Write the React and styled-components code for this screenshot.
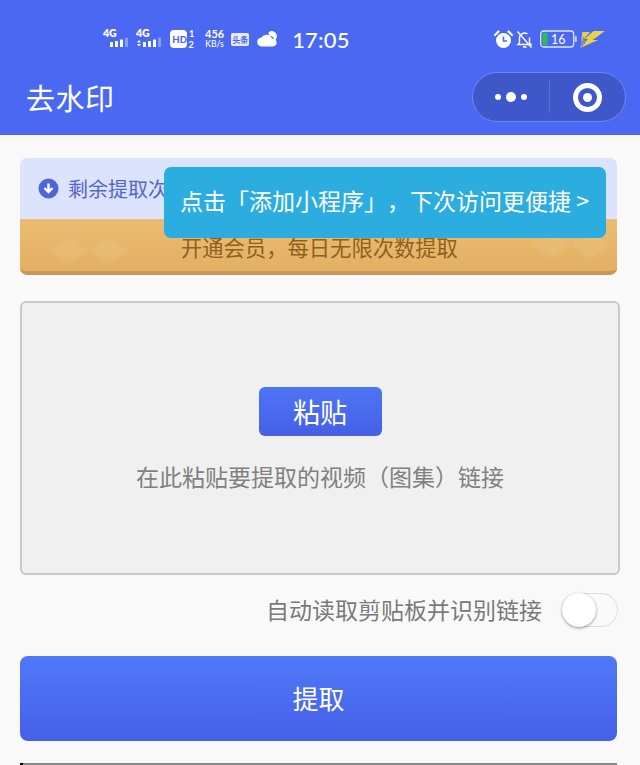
import React from 'react'
import styled, { createGlobalStyle } from 'styled-components'

const GlobalStyle = createGlobalStyle`
  html, body { margin:0; padding:0; background:#f9f9f9; }
  body { font-family:"Noto Sans CJK SC","Noto Sans",Roboto,sans-serif; text-spacing-trim:space-all; }
  * { box-sizing:border-box; }
`

const Page = styled.div`
  width:640px;
  height:765px;
  overflow:hidden;
  display:flex;
  flex-direction:column;
`
const Header = styled.header`
  height:135px;
  flex:none;
  background:#4a68f1;
  display:flex;
  flex-direction:column;
  color:#fff;
`
const StatusBar = styled.div`
  height:62px;
  flex:none;
  padding:16px 0 0 103px;
  display:flex;
  align-items:center;
  font-family:Lato,"Noto Sans",sans-serif;
`
const StatusLeft = styled.div`
  display:flex;
  align-items:center;
  height:34px;
`
const StatusRight = styled.div`
  margin-left:auto;
  padding-right:35px;
  display:flex;
  align-items:center;
  gap:3px;
  height:34px;
`
const Clock = styled.span`
  font-size:22px;
  font-weight:500;
  letter-spacing:.2px;
  margin-left:14px;
`
const Speed = styled.span`
  display:flex;
  flex-direction:column;
  align-items:center;
  font-size:11px;
  line-height:10px;
  font-weight:700;
  margin:0 7px 0 9px;
  small { font-size:8.5px; font-weight:500; }
`
const TinyBadge = styled.span`
  font-size:8px;
  line-height:13px;
  width:18px;
  height:13px;
  background:#e8ecfd;
  color:#4a68f1;
  font-weight:700;
  text-align:center;
  font-family:"Noto Sans CJK SC",sans-serif;
  border-radius:2px;
  overflow:hidden;
  white-space:nowrap;
  margin-right:8px;
`
const Spacer = styled.span`
  width:${p => p.$width}px;
`
const TitleBar = styled.div`
  flex:1;
  display:flex;
  align-items:center;
  justify-content:space-between;
  padding:0 14px 3px 26px;
`
const Title = styled.h1`
  margin:0;
  font-size:29px;
  line-height:40px;
  font-weight:400;
  letter-spacing:.5px;
`
const Capsule = styled.div`
  width:154px;
  height:50px;
  border-radius:25px;
  background:#3f58c9;
  border:1px solid #7088ee;
  display:flex;
  align-items:center;
`
const CapsulePart = styled.div`
  flex:1;
  display:flex;
  align-items:center;
  justify-content:center;
  gap:5px;
  height:32px;
  &:first-child { border-right:1px solid #5a72dc; }
`
const Dot = styled.i`
  display:block;
  width:${p => p.$size}px;
  height:${p => p.$size}px;
  border-radius:50%;
  background:#fff;
`
const Target = styled.div`
  width:29px;
  height:29px;
  border-radius:50%;
  border:5px solid #fff;
  display:flex;
  align-items:center;
  justify-content:center;
`
const Main = styled.main`
  flex:1;
  padding:23px 20px 0;
  display:flex;
  flex-direction:column;
`
const Banner = styled.section`
  position:relative;
  width:597px;
  height:117px;
  flex:none;
  border-radius:7px;
  display:flex;
  flex-direction:column;
`
const Notice = styled.div`
  height:61px;
  background:#dbe3fd;
  border-radius:7px 7px 0 0;
  padding:0 0 0 18px;
  display:flex;
  align-items:center;
  gap:9px;
  font-size:20px;
  color:#5567c6;
`
const Vip = styled.div`
  flex:1;
  position:relative;
  overflow:hidden;
  background:linear-gradient(180deg,#ecbc74,#e3b061);
  border-bottom:4px solid #c49a5c;
  border-radius:0 0 7px 7px;
  padding:12px 0 0 161px;
  font-size:21.3px;
  line-height:32px;
  color:#8f6120;
`
const VipMark = styled.svg`
  position:absolute;
  left:${p => p.$left}px;
  top:${p => p.$top}px;
  opacity:.07;
  filter:blur(1px);
`
const Tip = styled.div`
  position:absolute;
  left:144px;
  top:9px;
  width:442px;
  height:71px;
  border-radius:7px;
  background:#2bade0;
  color:#fff;
  font-size:23px;
  display:flex;
  align-items:center;
  padding:0 0 5px 16px;
  white-space:nowrap;
  z-index:2;
`
const PasteBox = styled.section`
  width:600px;
  height:274px;
  flex:none;
  margin-top:26px;
  background:#f0f0f0;
  border:2px solid #c9c9c9;
  border-radius:6px;
  display:flex;
  flex-direction:column;
  align-items:center;
  padding-top:84px;
`
const PasteButton = styled.button`
  width:123px;
  height:49px;
  border:none;
  border-radius:6px;
  background:linear-gradient(180deg,#4f74f6,#4560e6);
  color:#fff;
  font:inherit;
  font-size:27px;
  padding:0 0 1px;
`
const Hint = styled.p`
  margin:22px 0 0;
  font-size:23px;
  line-height:36px;
  color:#808080;
`
const ToggleRow = styled.div`
  margin-top:15px;
  height:40px;
  width:598px;
  flex:none;
  display:flex;
  align-items:center;
  justify-content:flex-end;
  gap:20px;
  font-size:23px;
  color:#7a7a7a;
`
const ToggleLabel = styled.span`
  position:relative;
  top:-1px;
`
const Switch = styled.div`
  width:56px;
  height:34px;
  border-radius:17px;
  border:1px solid #dedede;
  background:#fafafa;
  position:relative;
`
const Knob = styled.div`
  position:absolute;
  left:-1px;
  top:-1px;
  width:34px;
  height:34px;
  border-radius:50%;
  background:#fff;
  box-shadow:0 1px 3px rgba(0,0,0,.4);
`
const Extract = styled.button`
  margin-top:26px;
  width:597px;
  height:85px;
  flex:none;
  border:none;
  border-radius:8px;
  background:linear-gradient(180deg,#5078f8,#4560e8);
  color:#fff;
  font:inherit;
  font-size:26px;
  padding:0 0 2px;
`
const BottomLine = styled.div`
  margin-top:22px;
  height:2px;
  width:597px;
  flex:none;
  background:#8a8a8a;
  border-left:3px solid #000;
`

const Signal = ({ arrows }) => (
  <svg width="30" height="24" viewBox="0 0 30 24" fill="#fff">
    <text x="0" y="10" fontSize="10.5" fontWeight="800" fontFamily="Lato, sans-serif">4G</text>
    {arrows && <path d="M1 15.5l2-2.5 2 2.5zM1 17l2 2.5 2-2.5z" />}
    <rect x="7" y="15" width="3" height="5" rx=".6" />
    <rect x="12" y="14" width="3" height="6" rx=".6" />
    <rect x="17" y="12.5" width="3" height="7.5" rx=".6" />
    <rect x="22" y="10.5" width="3" height="9.5" rx=".6" opacity=".35" />
  </svg>
)

const HdBadge = () => (
  <svg width="26" height="22" viewBox="0 0 26 22" fill="#fff">
    <rect x="0" y="2" width="17" height="18" rx="4" />
    <text x="2.3" y="15" fontSize="9.5" fontWeight="900" fill="#4a68f1" fontFamily="Lato, sans-serif">HD</text>
    <text x="19" y="9" fontSize="9" fontWeight="700" fontFamily="Lato, sans-serif">1</text>
    <text x="18.5" y="20" fontSize="9" fontWeight="700" fontFamily="Lato, sans-serif">2</text>
  </svg>
)

const Cloud = () => (
  <svg width="21" height="16" viewBox="0 0 21 16" fill="#fff">
    <path d="M5 15.5a4.5 4.5 0 0 1-.6-9A6 6 0 0 1 15 7.5a4 4 0 0 1 1 8z" />
    <path d="M11.5 1.5a5 5 0 0 1 8 5.5c-.2.8-1 2-1.7 2.4A6 6 0 0 0 13 4.8c-1-.6-1.5-2.2-1.5-3.300z" />
  </svg>
)

const AlarmClock = () => (
  <svg width="19" height="19" viewBox="0 0 19 19">
    <path d="M1 5l3.5-3.5M18 5l-3.5-3.5" stroke="#fff" strokeWidth="2.2" strokeLinecap="round" />
    <circle cx="9.5" cy="10.5" r="7.5" fill="#fff" />
    <path d="M9.5 6.5v4.5h3.5" stroke="#4a68f1" strokeWidth="1.6" fill="none" />
  </svg>
)

const BellOff = () => (
  <svg width="17" height="19" viewBox="0 0 17 19" fill="none" stroke="#fff" strokeWidth="1.4">
    <path d="M3.5 13V8a5 5 0 0 1 8-4M13.5 7.5V13l1.5 1.5H2L3.5 13" />
    <path d="M7 17h3.5M1.5 1.5l14 16" />
  </svg>
)

const Battery = () => (
  <svg width="37" height="18" viewBox="0 0 37 18">
    <rect x=".7" y="1" width="33" height="16" rx="3" fill="none" stroke="#dfe6ff" strokeWidth="1.3" />
    <rect x="2.5" y="3" width="5" height="12" rx="1" fill="#27c24c" />
    <rect x="34.8" y="6" width="2" height="6" rx="1" fill="#c8d2fb" />
    <text x="11" y="14" fontSize="12.5" fill="#fff" fontFamily="Lato, sans-serif">16</text>
  </svg>
)

const Charge = () => (
  <svg width="25" height="19" viewBox="2 0 22 19" preserveAspectRatio="none">
    <path d="M4 2h7L3 12z" fill="#e5cf4a" />
    <path d="M14 1h10L13 10h5L2 18l7-9H6z" fill="#e8d245" />
    <path d="M5 6L2 18l5-5z" fill="#8c8fb0" />
  </svg>
)

const DownCircle = () => (
  <svg width="21" height="21" viewBox="0 0 21 21">
    <circle cx="10.5" cy="10.5" r="10" fill="#4e66dc" />
    <path d="M10.5 5.5v8M6.5 10l4 4 4-4" stroke="#fff" strokeWidth="2.4" fill="none" />
  </svg>
)

const Diamond = ({ left, top }) => (
  <VipMark $left={left} $top={top} width="78" height="36" viewBox="0 0 78 36" fill="#fff">
    <path d="M0 18L20 4l18 14-18 14zM40 18L58 4l20 14-20 14z" />
  </VipMark>
)

const App = () => {
  return (
    <Page>
      <GlobalStyle />
      <Header>
        <StatusBar>
          <StatusLeft>
            <Signal />
            <Spacer $width={3} />
            <Signal arrows />
            <Spacer $width={4} />
            <HdBadge />
            <Speed>456<small>KB/s</small></Speed>
            <TinyBadge>头条</TinyBadge>
            <Cloud />
            <Clock>17:05</Clock>
          </StatusLeft>
          <StatusRight>
            <AlarmClock />
            <BellOff />
            <Spacer $width={1} />
            <Battery />
            <Charge />
          </StatusRight>
        </StatusBar>
        <TitleBar>
          <Title>去水印</Title>
          <Capsule>
            <CapsulePart>
              <Dot $size={6} />
              <Dot $size={10} />
              <Dot $size={6} />
            </CapsulePart>
            <CapsulePart>
              <Target><Dot $size={9} /></Target>
            </CapsulePart>
          </Capsule>
        </TitleBar>
      </Header>
      <Main>
        <Banner>
          <Notice>
            <DownCircle />
            <span>剩余提取次数</span>
          </Notice>
          <Vip>
            <Diamond left={30} top={14} />
            <Diamond left={512} top={8} />
            开通会员，每日无限次数提取
          </Vip>
          <Tip>点击「添加小程序」，下次访问更便捷 &gt;</Tip>
        </Banner>
        <PasteBox>
          <PasteButton>粘贴</PasteButton>
          <Hint>在此粘贴要提取的视频（图集）链接</Hint>
        </PasteBox>
        <ToggleRow>
          <ToggleLabel>自动读取剪贴板并识别链接</ToggleLabel>
          <Switch><Knob /></Switch>
        </ToggleRow>
        <Extract>提取</Extract>
        <BottomLine />
      </Main>
    </Page>
  )
}

export default App
